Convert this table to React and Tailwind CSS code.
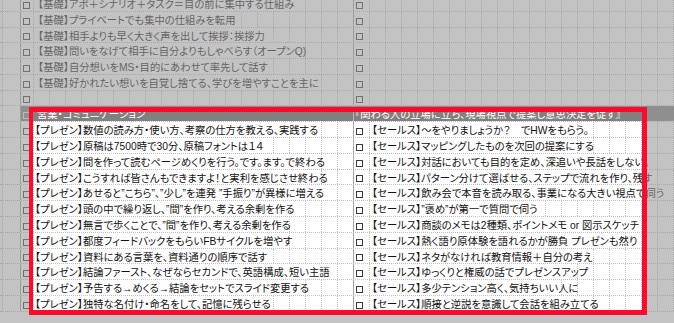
const upperLeft = [
  { text: '【基礎】アポ＋シナリオ＋タスク＝目の前に集中する仕組み', span: 16 },
  { text: '【基礎】プライベートでも集中の仕組みを転用', span: 13 },
  { text: '【基礎】相手よりも早く大きく声を出して挨拶：挨拶力', span: 15 },
  { text: '【基礎】問いをなげて相手に自分よりもしゃべらす（オープンQ)', span: 17 },
  { text: '【基礎】自分想いをMS・目的にあわせて率先して話す', span: 15 },
  { text: '【基礎】好かれたい想いを自覚し捨てる、学びを増やすことを主に', span: 18 },
  { text: '', span: 0 },
];

const rows = [
  ['【プレゼン】数値の読み方・使い方、考察の仕方を教える、実践する', 18, '【セールス】〜をやりましょうか？\u3000でHWをもらう。', 13],
  ['【プレゼン】原稿は7500時で30分、原稿フォントは１４', 15, '【セールス】マッピングしたものを次回の提案にする', 13],
  ['【プレゼン】間を作って読むページめくりを行う。です。ます。で終わる', 18, '【セールス】対話においても目的を定め、深追いや長話をしない。', 17],
  ['【プレゼン】こうすれば皆さんもできますよ！と実利を感じさせ終わる', 18, '【セールス】パターン分けて選ばせる、ステップで流れを作り、残す', 17],
  ['【プレゼン】あせると”こちら”、”少し”を連発 ”手振り”が異様に増える', 19, '【セールス】飲み会で本音を読み取る、事業になる大きい視点で伺う', 18],
  ['【プレゼン】頭の中で繰り返し、”間”を作り、考える余剰を作る', 17, '【セールス】”褒め”が第一で質問で伺う', 11],
  ['【プレゼン】無言で歩くことで、”間”を作り、考える余剰を作る', 16, '【セールス】商談のメモは2種類、ポイントメモ or 図示スケッチ', 17],
  ['【プレゼン】都度フィードバックをもらいFBサイクルを増やす', 16, '【セールス】熱く語り原体験を語れるかが勝負 プレゼンも然り', 16],
  ['【プレゼン】資料にある言葉を、資料通りの順序で話す', 15, '【セールス】ネタがなければ教育情報＋自分の考え', 14],
  ['【プレゼン】結論ファースト、なぜならセカンドで、英語構成、短い主語', 19, '【セールス】ゆっくりと権威の話でプレゼンスアップ', 13],
  ['【プレゼン】予告する→めくる→結論をセットでスライド変更する', 17, '【セールス】多少テンション高く、気持ちいい人に', 12],
  ['【プレゼン】独特な名付け・命名をして、記憶に残らせる', 15, '【セールス】順接と逆説を意識して会話を組み立てる', 14],
];

const Box = () => <div className="w-[7px] h-[7px] border border-[#3a3a3a] bg-white" />;

const Cells = ({ n }) =>
  Array.from({ length: Math.max(n, 0) }).map((_, i) => (
    <div key={i} className="w-[16px] shrink-0 border-r border-dotted border-[#bfbfbf]" />
  ));

const TextCell = ({ text, span, pad }) =>
  span > 0 ? (
    <div
      className={`shrink-0 border-r border-dotted border-[#bfbfbf] whitespace-nowrap leading-[14px] pt-[2px] ${pad}`}
      style={{ width: span * 16 }}
    >
      {text}
    </div>
  ) : null;

const Prefix = () => (
  <>
    <div className="w-[3px] shrink-0 border-r border-dotted border-[#bfbfbf]" />
    <div className="w-[18px] shrink-0 border-r border-solid border-[#a6a6a6]" />
    <div className="w-[13px] shrink-0 border-r border-dotted border-[#bfbfbf] flex items-end pl-[2px] pb-[2px]">
      <Box />
    </div>
  </>
);

const LeftBlock = ({ text, span, pad }) => (
  <div className="w-[320px] shrink-0 flex border-r border-solid border-[#a6a6a6]">
    <TextCell text={text} span={span} pad={pad} />
    <Cells n={19 - span} />
    <div className="flex-1" />
  </div>
);

const RightBlock = ({ text, span }) => (
  <div className="flex shrink-0">
    <div className="w-[16px] shrink-0 border-r border-dotted border-[#bfbfbf] flex items-end pl-[2px] pb-[2px]">
      <Box />
    </div>
    <TextCell text={text} span={span} pad="pl-[2px]" />
    <Cells n={20 - span} />
  </div>
);

export default function App() {
  return (
    <div className="relative w-[674px] h-[323px] overflow-hidden bg-white text-[#111] text-[10.3px] font-['Liberation_Sans','Noto_Sans_CJK_JP',sans-serif] [font-feature-settings:'palt']">
      <div className="-mt-[4.1px]">
        {upperLeft.map((r, i) => (
          <div key={i} className="flex h-[15.8px] border-b border-dotted border-[#bfbfbf]">
            <Prefix />
            <LeftBlock text={r.text} span={r.span} pad="pl-[4px]" />
            <RightBlock text="" span={0} />
          </div>
        ))}

        <div className="flex h-[15.8px] border-b border-dotted border-[#bfbfbf]">
          <div className="w-[3px] shrink-0 border-r border-dotted border-[#bfbfbf]" />
          <div className="w-[18px] shrink-0 border-r border-solid border-[#a6a6a6]" />
          <div className="w-[13px] shrink-0 bg-[#808080] flex items-end pl-[2px] pb-[2px]">
            <div className="w-[7px] h-[7px] border border-[#e6e6e6]" />
          </div>
          <div className="w-[320px] shrink-0 bg-[#808080] border-r border-solid border-[#b4b4b4] text-white whitespace-nowrap leading-[14px] pt-[2px] pl-[3px]">
            営業・コミュニケーション
          </div>
          <div className="w-[340px] shrink-0 bg-[#808080] text-white whitespace-nowrap leading-[14px] pt-[2px] pl-[1px]">
            『関わる人の立場に立ち、現場視点で提案し意思決定を促す』
          </div>
        </div>

        {rows.map(([lt, ls, rt, rs], i) => (
          <div key={i} className="flex h-[15.8px] border-b border-dotted border-[#bfbfbf]">
            <Prefix />
            <LeftBlock text={lt} span={ls} pad="pl-[1px]" />
            <RightBlock text={rt} span={rs} />
          </div>
        ))}
      </div>

      <div className="absolute left-[29px] top-[106.7px] w-[618px] h-[208px] border-[5px] border-l-[4px] border-[#ff0a2d] shadow-[0_0_0_2000px_rgba(153,153,153,0.59)]" />
    </div>
  );
}
